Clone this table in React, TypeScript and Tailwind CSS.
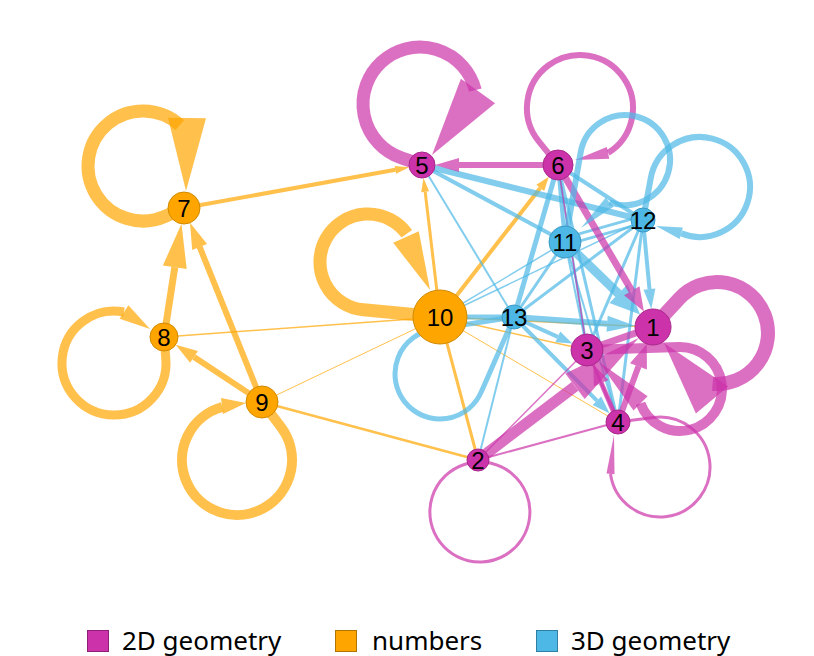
import React from 'react';

type G = 'p' | 'o' | 'b';
type Pt = [number, number];

const FILL: Record<G, string> = { p: '#cc33aa', o: '#ffa500', b: '#4db8e6' };
const BORDER: Record<G, string> = { p: '#a8288c', o: '#d08a00', b: '#3b9ac4' };

const N: Record<number, { x: number; y: number; r: number; g: G }> = {
  1: { x: 653, y: 327, r: 18, g: 'p' },
  2: { x: 478, y: 460, r: 11, g: 'p' },
  3: { x: 587, y: 350, r: 16, g: 'p' },
  4: { x: 618, y: 422, r: 12, g: 'p' },
  5: { x: 422, y: 165, r: 13, g: 'p' },
  6: { x: 558, y: 165, r: 15, g: 'p' },
  7: { x: 184, y: 208, r: 16, g: 'o' },
  8: { x: 164, y: 337, r: 14, g: 'o' },
  9: { x: 262, y: 402, r: 16, g: 'o' },
  10: { x: 440, y: 317, r: 27, g: 'o' },
  11: { x: 565, y: 242, r: 16, g: 'b' },
  12: { x: 643, y: 220, r: 12, g: 'b' },
  13: { x: 514, y: 317, r: 12, g: 'b' },
};

type E = { s: number; t: number; w: number; g: G; a?: [number, number]; off?: number };

const EDGES: E[] = [
  // orange
  { s: 7, t: 5, w: 4, g: 'o', a: [14, 4] },
  { s: 8, t: 7, w: 7, g: 'o', a: [44, 12] },
  { s: 9, t: 7, w: 6, g: 'o', a: [26, 8] },
  { s: 9, t: 8, w: 6, g: 'o', a: [22, 7] },
  { s: 8, t: 10, w: 1.5, g: 'o' },
  { s: 9, t: 10, w: 1, g: 'o' },
  { s: 9, t: 2, w: 2.5, g: 'o' },
  { s: 10, t: 5, w: 3, g: 'o', a: [14, 4] },
  { s: 10, t: 6, w: 4, g: 'o', a: [14, 5] },
  { s: 10, t: 2, w: 3, g: 'o' },
  { s: 10, t: 3, w: 1.5, g: 'o' },
  { s: 10, t: 4, w: 1, g: 'o' },
  { s: 10, t: 1, w: 1.5, g: 'o' },
  // blue
  { s: 11, t: 5, w: 4, g: 'b' },
  { s: 12, t: 5, w: 6, g: 'b' },
  { s: 13, t: 5, w: 2, g: 'b' },
  { s: 11, t: 6, w: 4, g: 'b' },
  { s: 12, t: 6, w: 4, g: 'b' },
  { s: 13, t: 6, w: 5, g: 'b' },
  { s: 4, t: 6, w: 3, g: 'b' },
  { s: 3, t: 6, w: 2.5, g: 'b' },
  { s: 11, t: 1, w: 9, g: 'b', a: [30, 13] },
  { s: 11, t: 12, w: 3, g: 'b', off: 3 },
  { s: 11, t: 12, w: 3, g: 'b', off: -4 },
  { s: 11, t: 13, w: 3, g: 'b' },
  { s: 11, t: 10, w: 1.5, g: 'b' },
  { s: 12, t: 10, w: 1.5, g: 'b' },
  { s: 12, t: 13, w: 3, g: 'b' },
  { s: 12, t: 1, w: 4, g: 'b', a: [20, 6] },
  { s: 12, t: 3, w: 3, g: 'b' },
  { s: 12, t: 4, w: 3, g: 'b' },
  { s: 13, t: 1, w: 6, g: 'b', a: [28, 8] },
  { s: 13, t: 3, w: 4, g: 'b', a: [16, 6] },
  { s: 13, t: 4, w: 4, g: 'b', a: [18, 6] },
  { s: 13, t: 2, w: 2, g: 'b' },
  { s: 13, t: 10, w: 5, g: 'b' },
  { s: 11, t: 3, w: 2, g: 'b' },
  { s: 11, t: 4, w: 2, g: 'b' },
  // pink
  { s: 6, t: 5, w: 6, g: 'p', a: [24, 7] },
  { s: 6, t: 1, w: 7, g: 'p', a: [24, 9] },
  { s: 6, t: 3, w: 1.5, g: 'p' },
  { s: 2, t: 1, w: 11, g: 'p', a: [80, 16] },
  { s: 2, t: 3, w: 1.5, g: 'p' },
  { s: 2, t: 4, w: 2, g: 'p' },
  { s: 3, t: 1, w: 7, g: 'p' },
  { s: 4, t: 1, w: 6, g: 'p', a: [24, 9] },
  { s: 4, t: 3, w: 5, g: 'p', a: [20, 8] },
  { s: 3, t: 4, w: 3, g: 'p' },
];

type L = {
  n: number;
  c: Pt;
  r: number;
  a1: number;
  cw: boolean;
  w: number;
  g: G;
  toNode?: boolean;
  arrow?: { b?: Pt; t: Pt; hw: number };
};

const LOOPS: L[] = [
  { n: 7, c: [143, 166], r: 55, a1: -48, cw: true, w: 13, g: 'o', arrow: { b: [187, 118], t: [186, 191], hw: 19 } },
  { n: 8, c: [114, 363], r: 52, a1: 281, cw: true, w: 9, g: 'o', arrow: { b: [124, 312], t: [150, 329], hw: 8 } },
  { n: 9, c: [237, 460], r: 55, a1: 254.5, cw: true, w: 10, g: 'o', arrow: { b: [222, 406], t: [246, 403], hw: 8 } },
  { n: 10, c: [368, 262], r: 48, a1: -36, cw: true, w: 13, g: 'o', arrow: { b: [406, 237], t: [430, 290], hw: 14 } },
  { n: 5, c: [420, 104], r: 57, a1: -14, cw: true, w: 13, g: 'p', arrow: { b: [478, 91], t: [432, 155], hw: 21 } },
  { n: 6, c: [580, 108], r: 53, a1: 58, cw: true, w: 6, g: 'p', arrow: { t: [575, 160], hw: 6 } },
  { n: 1, c: [717, 333], r: 51, a1: 95, cw: true, w: 14, g: 'p', arrow: { b: [712, 400], t: [664, 343], hw: 21 } },
  { n: 3, c: [680, 389], r: 42, a1: 160, cw: true, w: 10, g: 'p', arrow: { t: [599, 362], hw: 10 } },
  { n: 4, c: [660, 467], r: 50, a1: 172, cw: true, w: 3, g: 'p', arrow: { t: [614, 435], hw: 4 } },
  { n: 2, c: [480, 512], r: 50, a1: 283.9, cw: false, w: 3, g: 'p', toNode: true },
  { n: 11, c: [625, 160], r: 45, a1: 110, cw: true, w: 6, g: 'b', arrow: { t: [581, 228], hw: 6 } },
  { n: 12, c: [700, 187], r: 50, a1: 112, cw: true, w: 6, g: 'b', arrow: { t: [656, 226], hw: 6 } },
  { n: 13, c: [440, 374], r: 45, a1: 22, cw: false, w: 5, g: 'b', toNode: true },
];

const f = (v: number) => v.toFixed(1);

function tri(b: Pt, t: Pt, hw: number) {
  const dx = t[0] - b[0];
  const dy = t[1] - b[1];
  const len = Math.hypot(dx, dy) || 1;
  const px = -dy / len;
  const py = dx / len;
  return `${f(t[0])},${f(t[1])} ${f(b[0] + px * hw)},${f(b[1] + py * hw)} ${f(b[0] - px * hw)},${f(b[1] - py * hw)}`;
}

function EdgeEl({ e }: { e: E }) {
  const A = N[e.s];
  const B = N[e.t];
  const dx = B.x - A.x;
  const dy = B.y - A.y;
  const len = Math.hypot(dx, dy);
  const ux = dx / len;
  const uy = dy / len;
  const px = -uy;
  const py = ux;
  const o = e.off ?? 0;
  const x1 = A.x + px * o;
  const y1 = A.y + py * o;
  const bx = B.x + px * o;
  const by = B.y + py * o;
  const color = FILL[e.g];
  if (!e.a) {
    return <line x1={x1} y1={y1} x2={bx} y2={by} stroke={color} strokeOpacity={0.7} strokeWidth={e.w} />;
  }
  const tx = bx - ux * B.r;
  const ty = by - uy * B.r;
  const [al, hw] = e.a;
  const ex = tx - ux * al;
  const ey = ty - uy * al;
  return (
    <g>
      <line x1={x1} y1={y1} x2={ex} y2={ey} stroke={color} strokeOpacity={0.7} strokeWidth={e.w} />
      <polygon points={tri([ex, ey], [tx, ty], hw)} fill={color} fillOpacity={0.7} />
    </g>
  );
}

function LoopEl({ l }: { l: L }) {
  const P = N[l.n];
  const [cx, cy] = l.c;
  const r = l.r;
  const dx = P.x - cx;
  const dy = P.y - cy;
  const d = Math.hypot(dx, dy);
  const phi = Math.atan2(dy, dx);
  const beta = Math.acos(Math.min(1, r / d));
  const cands = [phi + beta, phi - beta];
  let th0 = cands[0];
  for (const th of cands) {
    const sx = cx + r * Math.cos(th);
    const sy = cy + r * Math.sin(th);
    const tx = l.cw ? -Math.sin(th) : Math.sin(th);
    const ty = l.cw ? Math.cos(th) : -Math.cos(th);
    if ((sx - P.x) * tx + (sy - P.y) * ty > 0) {
      th0 = th;
      break;
    }
  }
  const th1 = (l.a1 * Math.PI) / 180;
  const S: Pt = [cx + r * Math.cos(th0), cy + r * Math.sin(th0)];
  const Ep: Pt = [cx + r * Math.cos(th1), cy + r * Math.sin(th1)];
  const TAU = Math.PI * 2;
  let sw = l.cw ? th1 - th0 : th0 - th1;
  sw = ((sw % TAU) + TAU) % TAU;
  const large = sw > Math.PI ? 1 : 0;
  let path = `M${f(P.x)} ${f(P.y)}L${f(S[0])} ${f(S[1])}A${r} ${r} 0 ${large} ${l.cw ? 1 : 0} ${f(Ep[0])} ${f(Ep[1])}`;
  if (l.toNode) path += `L${f(P.x)} ${f(P.y)}`;
  const color = FILL[l.g];
  return (
    <g>
      <path d={path} fill="none" stroke={color} strokeOpacity={0.7} strokeWidth={l.w} />
      {l.arrow && (
        <polygon points={tri(l.arrow.b ?? Ep, l.arrow.t, l.arrow.hw)} fill={color} fillOpacity={0.7} />
      )}
    </g>
  );
}

function Graph() {
  return (
    <svg width={814} height={630} viewBox="0 0 814 630" className="block">
      {EDGES.map((e, i) => (
        <EdgeEl key={'e' + i} e={e} />
      ))}
      {LOOPS.map((l, i) => (
        <LoopEl key={'l' + i} l={l} />
      ))}
      {Object.entries(N).map(([k, v]) => (
        <g key={'n' + k}>
          <circle cx={v.x} cy={v.y} r={v.r} fill={FILL[v.g]} stroke={BORDER[v.g]} strokeWidth={1} />
          <text
            x={v.x}
            y={v.y + 8.5}
            textAnchor="middle"
            fontSize={24}
            fill="#000"
            style={{ fontFamily: '"Liberation Sans", Arial, sans-serif' }}
          >
            {k}
          </text>
        </g>
      ))}
    </svg>
  );
}

export default function App() {
  return (
    <div className="h-[656px] w-[814px] overflow-hidden bg-white font-['Noto_Sans',sans-serif]">
      <Graph />
      <div className="flex h-[22px] items-center pl-[87px]">
        <div className="flex w-[248px] items-center">
          <span className="block h-[22px] w-[22px] border border-[#8e1f76] bg-[#cc33aa]" />
          <span className="mb-[3px] ml-[13px] text-[26px] leading-none text-black">2D geometry</span>
        </div>
        <div className="flex w-[201px] items-center">
          <span className="block h-[22px] w-[22px] border border-[#b07400] bg-[#ffa500]" />
          <span className="mb-[3px] ml-[15px] text-[26px] leading-none text-black">numbers</span>
        </div>
        <div className="flex items-center">
          <span className="block h-[22px] w-[22px] border border-[#2f7fa3] bg-[#4db8e6]" />
          <span className="mb-[3px] ml-[13px] text-[26px] leading-none text-black">3D geometry</span>
        </div>
      </div>
    </div>
  );
}
